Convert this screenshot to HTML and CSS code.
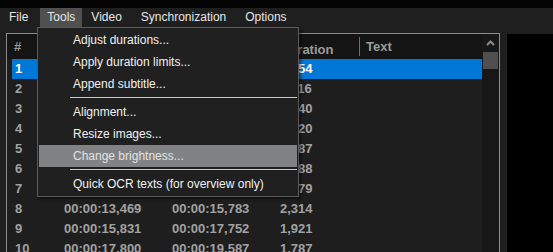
FILE: index.html
```html
<!DOCTYPE html>
<html lang="en">
<head>
    <meta charset="UTF-8">
    <title>Subtitle Edit - Tools</title>
    <link rel="stylesheet" href="styles.css">
</head>
<body>

    <div class="top-strip"></div>

    <div class="menubar">
        <span class="menu-title">File</span>
        <span class="menu-title open">Tools</span>
        <span class="menu-title">Video</span>
        <span class="menu-title">Synchronization</span>
        <span class="menu-title">Options</span>
    </div>

    <div class="dropdown">
        <div class="drop-item">Adjust durations...</div>
        <div class="drop-item">Apply duration limits...</div>
        <div class="drop-item">Append subtitle...</div>
        <div class="drop-sep"></div>
        <div class="drop-item">Alignment...</div>
        <div class="drop-item">Resize images...</div>
        <div class="drop-item active">Change brightness...</div>
        <div class="drop-sep"></div>
        <div class="drop-item">Quick OCR texts (for overview only)</div>
    </div>

    <div class="main">
        <div class="grid">
            <div class="grid-body">
                <div class="grid-head">
                    <span class="col-num">#</span>
                    <span class="col-start">Start time</span>
                    <span class="col-end">End time</span>
                    <span class="col-dur">Duration</span>
                    <span class="col-text">Text</span>
                </div>
                <div id="rows"></div>
            </div>
            <div class="scrollbar">
                <div class="scroll-up">
                    <svg width="9" height="6" viewBox="0 0 9 6"><path d="M1 5 L4.5 1.5 L8 5" fill="none" stroke="#8a8a8a" stroke-width="2"/></svg>
                </div>
                <div class="scroll-thumb"></div>
            </div>
        </div>
        <div class="preview"></div>
    </div>

    <script>
        // Subtitle lines shown in the grid
        const lines = [
            ['1', '00:00:01,000', '00:00:03,654', '2,654'],
            ['2', '00:00:03,702', '00:00:05,818', '2,116'],
            ['3', '00:00:05,866', '00:00:08,106', '2,240'],
            ['4', '00:00:08,154', '00:00:10,274', '2,120'],
            ['5', '00:00:10,322', '00:00:11,909', '1,587'],
            ['6', '00:00:11,957', '00:00:13,845', '1,888'],
            ['7', '00:00:13,893', '00:00:15,372', '1,479'],
            ['8', '00:00:13,469', '00:00:15,783', '2,314'],
            ['9', '00:00:15,831', '00:00:17,752', '1,921'],
            ['10', '00:00:17,800', '00:00:19,587', '1,787']
        ];

        const rows = document.getElementById('rows');
        lines.forEach(function (line, i) {
            const row = document.createElement('div');
            row.className = i === 0 ? 'grid-row selected' : 'grid-row';
            row.innerHTML = `
                <span class="col-num">${line[0]}</span>
                <span class="col-start">${line[1]}</span>
                <span class="col-end">${line[2]}</span>
                <span class="col-dur">${line[3]}</span>
                <span class="col-text"></span>
            `;
            rows.appendChild(row);
        });
    </script>

</body>
</html>
```

FILE: styles.css
```css
body {
    margin: 0;
    background-color: #1f1f1f;
    font-family: "Liberation Sans", Arial, sans-serif;
    overflow: hidden;
    height: 252px;
}
.top-strip {
    height: 8px;
    background-color: #040404;
}
.menubar {
    height: 19px;
    display: flex;
    align-items: center;
    padding-left: 2px;
    font-size: 12px;
    color: #e6e6e6;
}
.menu-title {
    height: 19px;
    line-height: 19px;
    padding: 0 7px;
    margin-right: 5px;
}
.menu-title.open {
    background-color: #505050;
    margin-right: 2px;
}
.dropdown {
    position: absolute;
    left: 37px;
    top: 27px;
    width: 258px;
    padding: 1px;
    border: 1px solid #5a5a5a;
    background-color: #202020;
    box-shadow: 2px 2px 3px rgba(0, 0, 0, 0.5);
    font-size: 12px;
    color: #f0f0f0;
    z-index: 2;
}
.drop-item {
    height: 22px;
    line-height: 22px;
    padding-left: 34px;
}
.drop-item.active {
    background-color: #808284;
    color: #e2e2e2;
}
.drop-sep {
    height: 1px;
    margin: 2px 0 3px 31px;
    background-color: #c8c8c8;
}
.main {
    display: flex;
    padding: 6px 0 0 6px;
    gap: 7px;
}
.grid {
    width: 492px;
    height: 240px;
    border: 1px solid #8c8c8c;
    border-bottom: none;
    display: flex;
    background-color: #1e1e1e;
}
.grid-body {
    flex: 1;
    font-size: 13px;
    font-weight: bold;
    color: #a2a2a2;
}
.grid-head {
    height: 25px;
    line-height: 25px;
    display: flex;
    background-color: #141414;
    color: #9c9c9c;
}
.grid-head .col-num {
    margin-left: 7px;
    width: 50px;
}
.grid-head .col-dur {
    border-right: 1px solid #6e6e6e;
    height: 19px;
    margin-top: 3px;
}
.grid-head .col-text {
    padding-left: 6px;
}
.grid-row {
    height: 20px;
    line-height: 20px;
    display: flex;
    margin-left: 5px;
}
.grid-row.selected {
    background-color: #0078d7;
    color: #ffffff;
}
.grid-row .col-num {
    padding-left: 3px;
    width: 49px;
}
.col-start,
.col-end {
    width: 108px;
}
.col-dur {
    width: 79px;
}
.scrollbar {
    width: 17px;
    background-color: #171717;
}
.scroll-up {
    height: 18px;
    display: flex;
    align-items: center;
    justify-content: center;
}
.scroll-thumb {
    height: 17px;
    margin: 0 1px;
    background-color: #4f4f4f;
}
.preview {
    flex: 1;
    height: 218px;
    margin-top: 1px;
    background-color: #000000;
}
```
